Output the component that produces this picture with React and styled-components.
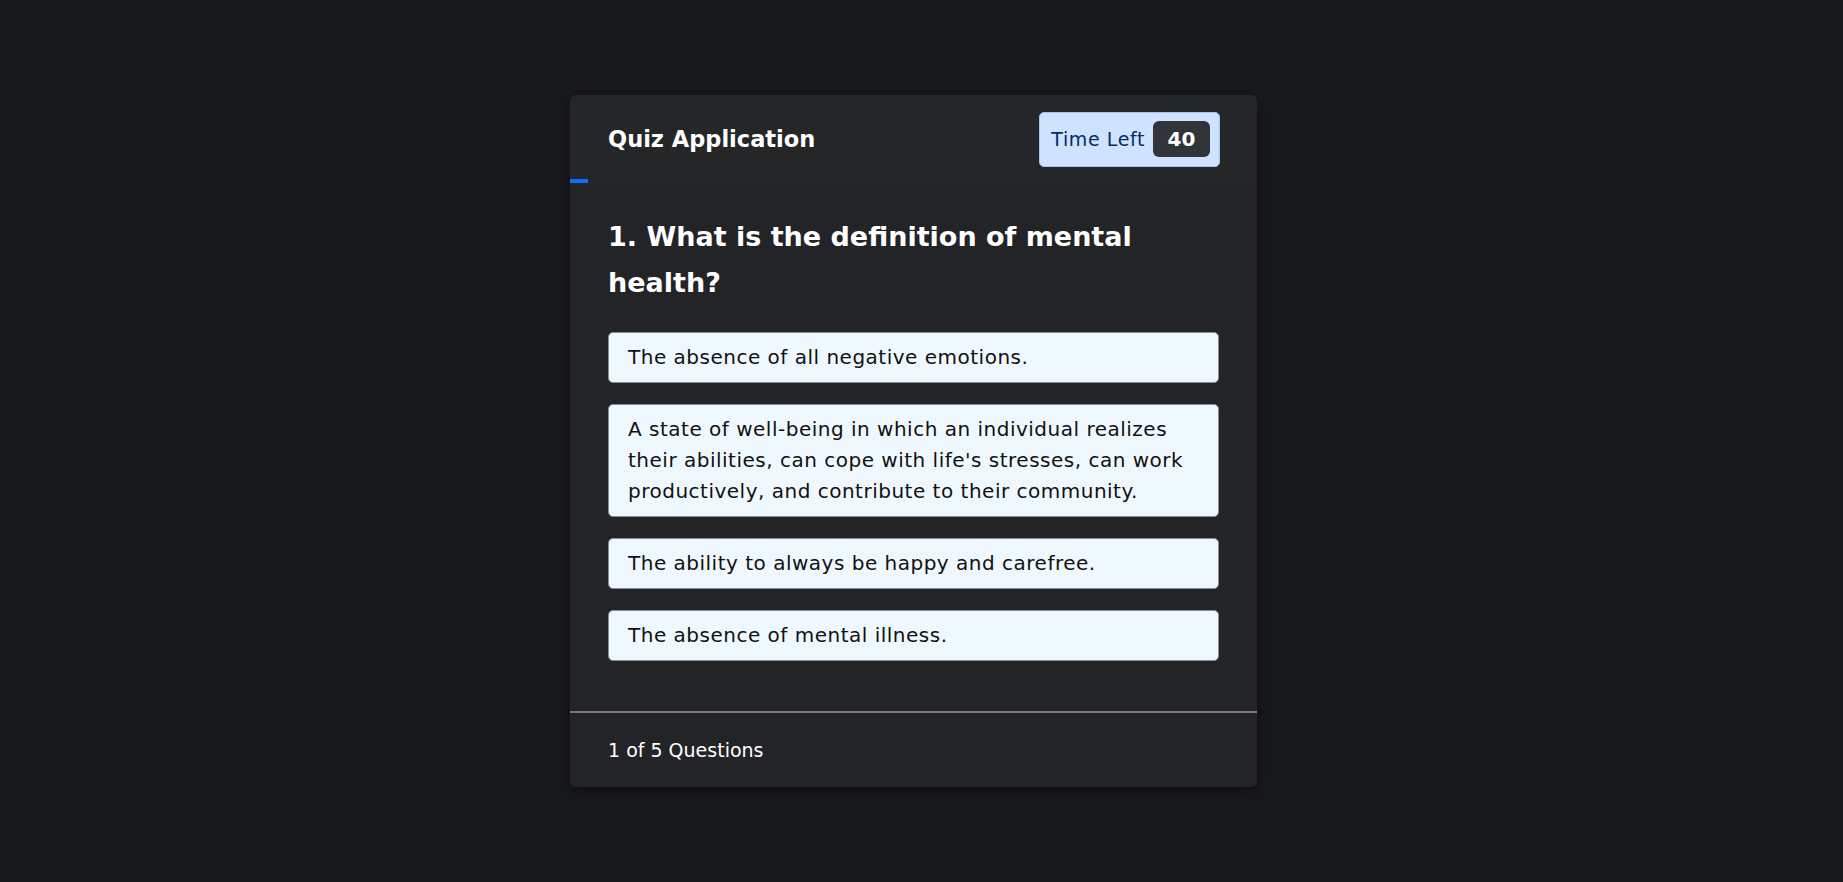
import React from 'react';
import styled, { createGlobalStyle } from 'styled-components';

const GlobalStyle = createGlobalStyle`
    body {
        margin: 0;
        background: #18191b;
        font-family: "DejaVu Sans", "Open Sans", sans-serif;
    }
`;

const questions = [
    {
        question: 'What is the definition of mental health?',
        options: [
            'The absence of all negative emotions.',
            "A state of well-being in which an individual realizes their abilities, can cope with life's stresses, can work productively, and contribute to their community.",
            'The ability to always be happy and carefree.',
            'The absence of mental illness.',
        ],
    },
];

function App() {
    const current = 0;
    const q = questions[current];
    return (
        <Page>
            <GlobalStyle />
            <Card>
                <Header>
                    <Title>Quiz Application</Title>
                    <Timer>
                        Time Left
                        <TimerValue>40</TimerValue>
                    </Timer>
                    <TimeBar />
                </Header>
                <Body>
                    <Question>{`${current + 1}. ${q.question}`}</Question>
                    <OptionList>
                        {q.options.map((opt) => (
                            <Option key={opt}>{opt}</Option>
                        ))}
                    </OptionList>
                </Body>
                <Footer>
                    <Count>{`${current + 1} of ${5} Questions`}</Count>
                </Footer>
            </Card>
        </Page>
    );
}

export default App;

const Page = styled.div`
    min-height: 100vh;
    display: flex;
    align-items: center;
    justify-content: center;
    padding-right: 16px;
    box-sizing: border-box;
`;

const Card = styled.div`
    width: 687px;
    background: #232427;
    border-radius: 6px;
    box-shadow: 0 4px 14px rgba(0, 0, 0, 0.35);
    overflow: hidden;
    color: #fff;
`;

const Header = styled.div`
    position: relative;
    height: 88px;
    background: #252628;
    display: flex;
    align-items: center;
    justify-content: space-between;
    padding: 0 37px 0 38px;
`;

const Title = styled.h1`
    margin: 0;
    font-size: 22.5px;
    font-weight: 700;
`;

const Timer = styled.div`
    display: flex;
    align-items: center;
    gap: 8px;
    height: 55px;
    box-sizing: border-box;
    padding: 0 9px 0 11px;
    background: #cfe2ff;
    border: 1px solid #9ec5fe;
    border-radius: 5px;
    color: #052c65;
    font-size: 19px;
    letter-spacing: 0.6px;
`;

const TimerValue = styled.span`
    display: flex;
    align-items: center;
    justify-content: center;
    width: 57px;
    height: 36px;
    border-radius: 6px;
    background: #313439;
    color: #fff;
    font-size: 20px;
    font-weight: 600;
    letter-spacing: 0;
`;

const TimeBar = styled.div`
    position: absolute;
    left: 0;
    bottom: 0;
    width: 18px;
    height: 4px;
    background: #0d6efd;
`;

const Body = styled.div`
    padding: 31px 38px 50px;
    border-bottom: 2px solid #7a7a7a;
`;

const Question = styled.h2`
    margin: 0 0 26px;
    font-size: 27px;
    line-height: 46px;
    font-weight: 700;
`;

const OptionList = styled.ul`
    list-style: none;
    margin: 0;
    padding: 0;
    display: flex;
    flex-direction: column;
    gap: 21px;
`;

const Option = styled.li`
    background: #f0f8ff;
    color: #111;
    border: 1px solid #868e96;
    border-radius: 5px;
    padding: 9px 19px;
    font-size: 20px;
    letter-spacing: 0.5px;
    line-height: 31px;
    cursor: pointer;
`;

const Footer = styled.div`
    height: 74px;
    display: flex;
    align-items: center;
    padding: 0 38px;
`;

const Count = styled.p`
    margin: 0;
    font-size: 19px;
`;
